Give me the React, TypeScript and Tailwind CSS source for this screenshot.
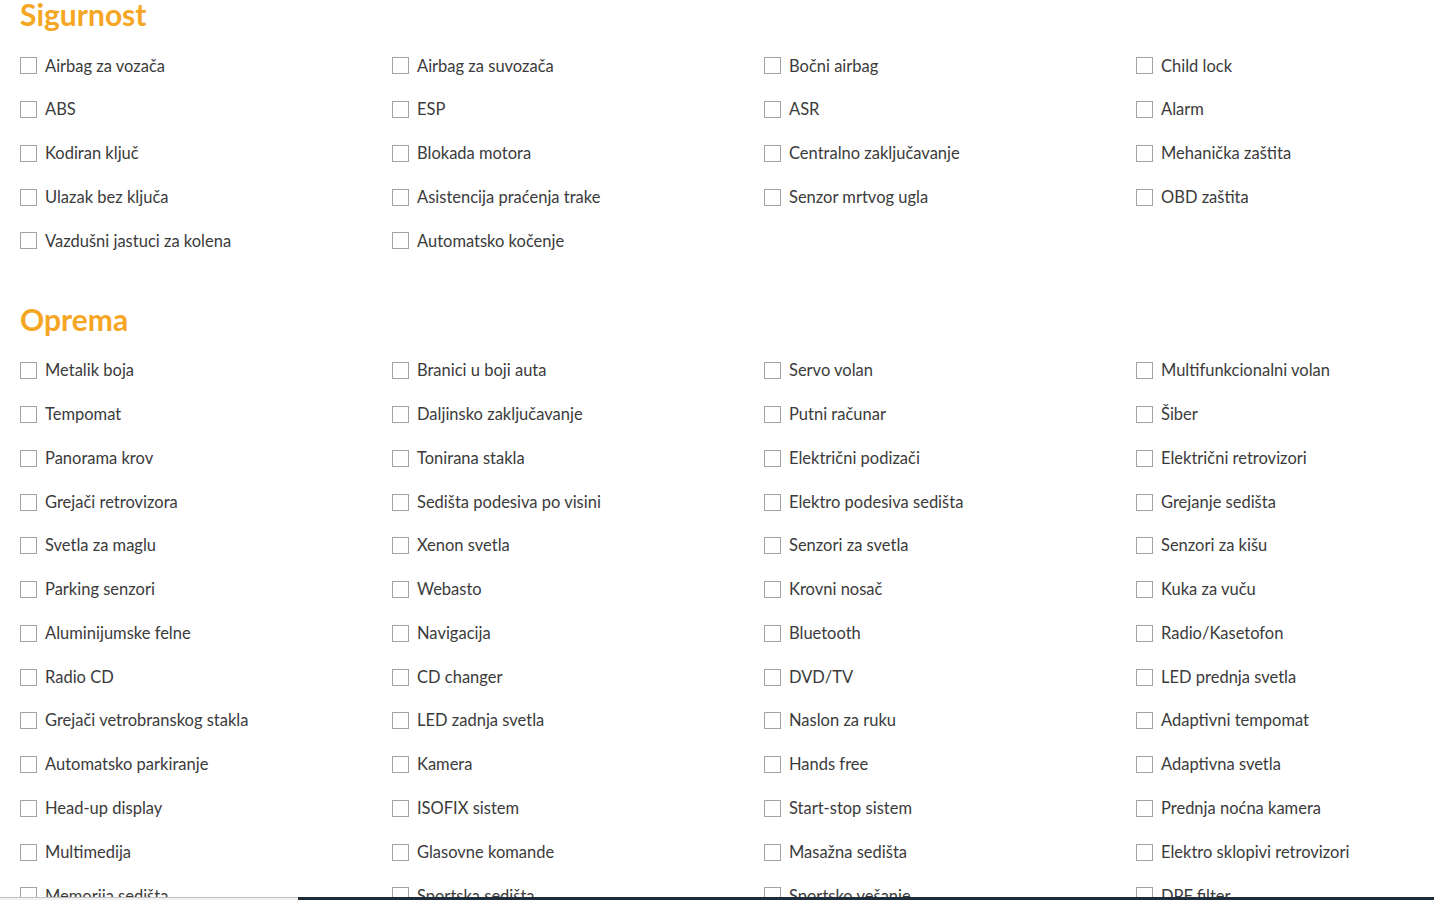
import React from 'react';

const sigurnost = [
  'Airbag za vozača', 'Airbag za suvozača', 'Bočni airbag', 'Child lock',
  'ABS', 'ESP', 'ASR', 'Alarm',
  'Kodiran ključ', 'Blokada motora', 'Centralno zaključavanje', 'Mehanička zaštita',
  'Ulazak bez ključa', 'Asistencija praćenja trake', 'Senzor mrtvog ugla', 'OBD zaštita',
  'Vazdušni jastuci za kolena', 'Automatsko kočenje',
];

const oprema = [
  'Metalik boja', 'Branici u boji auta', 'Servo volan', 'Multifunkcionalni volan',
  'Tempomat', 'Daljinsko zaključavanje', 'Putni računar', 'Šiber',
  'Panorama krov', 'Tonirana stakla', 'Električni podizači', 'Električni retrovizori',
  'Grejači retrovizora', 'Sedišta podesiva po visini', 'Elektro podesiva sedišta', 'Grejanje sedišta',
  'Svetla za maglu', 'Xenon svetla', 'Senzori za svetla', 'Senzori za kišu',
  'Parking senzori', 'Webasto', 'Krovni nosač', 'Kuka za vuču',
  'Aluminijumske felne', 'Navigacija', 'Bluetooth', 'Radio/Kasetofon',
  'Radio CD', 'CD changer', 'DVD/TV', 'LED prednja svetla',
  'Grejači vetrobranskog stakla', 'LED zadnja svetla', 'Naslon za ruku', 'Adaptivni tempomat',
  'Automatsko parkiranje', 'Kamera', 'Hands free', 'Adaptivna svetla',
  'Head-up display', 'ISOFIX sistem', 'Start-stop sistem', 'Prednja noćna kamera',
  'Multimedija', 'Glasovne komande', 'Masažna sedišta', 'Elektro sklopivi retrovizori',
  'Memorija sedišta', 'Sportska sedišta', 'Sportsko vešanje', 'DPF filter',
];

function Section({ title, items, className = '' }: { title: string; items: string[]; className?: string }) {
  return (
    <section className={className}>
      <h2 className="text-[30px] leading-[36px] font-bold text-[#f5a623]">{title}</h2>
      <div className="mt-3 grid grid-cols-[repeat(4,372px)] auto-rows-[43.78px]">
        {items.map((label) => (
          <label key={label} className="flex items-center gap-2 cursor-pointer">
            <span className="w-[17px] h-[17px] border border-[#a3a3a3] bg-white shrink-0" />
            <span className="text-[16.5px] text-[#3b3b3b] whitespace-nowrap">{label}</span>
          </label>
        ))}
      </div>
    </section>
  );
}

export default function App() {
  return (
    <div
      className="relative h-[900px] overflow-hidden bg-white"
      style={{ fontFamily: 'Lato, "Liberation Sans", sans-serif' }}
    >
      <div className="pl-5 -mt-[4px]">
        <Section title="Sigurnost" items={sigurnost} />
        <Section title="Oprema" items={oprema} className="mt-[38px]" />
      </div>

      {/* horizontal scrollbar */}
      <div className="absolute bottom-0 left-0 right-0 h-[3px] flex">
        <div className="w-[298px] bg-[#f1f1f1] border-t border-[#c1c1c1]" />
        <div className="flex-1 bg-[#1e2b38]" />
      </div>
    </div>
  );
}
